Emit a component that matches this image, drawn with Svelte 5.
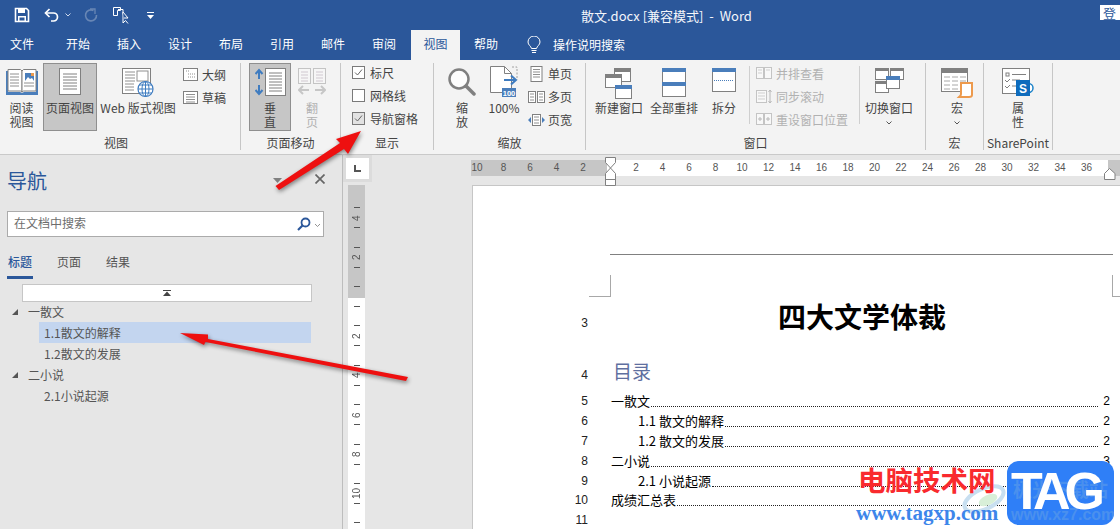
<script>
  const tabs = ['文件','开始','插入','设计','布局','引用','邮件','审阅'];
  const hnums = [10,8,6,4,2,0,2,4,6,8,10,12,14,16,18,20,22,24,26,28,30,32,34,36];
  const vnums = ['4','2','','2','4','6','8','10',''];
  const toc = [
    {n:5,t:'一散文',p:2,sub:false},
    {n:6,t:'1.1 散文的解释',p:2,sub:true},
    {n:7,t:'1.2 散文的发展',p:2,sub:true},
    {n:8,t:'二小说',p:3,sub:false},
    {n:9,t:'2.1 小说起源',p:3,sub:true},
    {n:10,t:'成绩汇总表',p:3,sub:false},
  ];
</script>

<div class="app">
  <header class="titlebar">
    <div class="qat">
      <svg class="q-save" width="16" height="16" viewBox="0 0 16 16"><path d="M1.5 1.5h11l2 2v11h-13z" fill="none" stroke="#fff" stroke-width="1.6"/><rect x="4" y="2" width="7" height="4" fill="#fff"/><rect x="4" y="9" width="8" height="5" fill="#fff"/><rect x="5.500" y="10.500" width="5" height="3" fill="#2b579a"/></svg>
      <svg class="q-undo" width="15" height="14" viewBox="0 0 15 14"><path d="M2 5h7.500a4 4 0 0 1 0 8H7" fill="none" stroke="#fff" stroke-width="1.700"/><path d="M5.500 1L1.500 5l4 4" fill="none" stroke="#fff" stroke-width="1.700"/></svg>
      <svg class="q-drop" width="6" height="4" viewBox="0 0 6 4"><path d="M.5.500L3 3 5.500.500" fill="none" stroke="#cdd8ea" stroke-width="1"/></svg>
      <svg class="q-redo" width="14" height="14" viewBox="0 0 14 14"><path d="M9.500 2.500a5.500 5.500 0 1 0 3 4.500" fill="none" stroke="#6f8cb8" stroke-width="1.600"/><path d="M6 1h5v5" fill="none" stroke="#6f8cb8" stroke-width="1.300"/></svg>
      <svg class="q-touch" width="16" height="18" viewBox="0 0 16 18"><path d="M.5 .5h7v3h-3v5h-4z" fill="none" stroke="#fff"/><path d="M5 2.500h5v5" fill="none" stroke="#fff"/><path d="M10 5v11l2.500-2.500 2.500 3" fill="#2b579a" stroke="#fff"/><path d="M10 5l5 6h-4" fill="#2b579a" stroke="#fff"/></svg>
      <svg class="q-more" width="7" height="7" viewBox="0 0 7 7"><rect x="0" y="0" width="7" height="1" fill="#fff"/><path d="M0 3h7L3.500 7z" fill="#fff"/></svg>
    </div>
    <div class="doc-title">散文.docx [兼容模式]&nbsp; -&nbsp; Word</div>
    <div class="login">登</div>
  </header>

  <nav class="tabs">
    {#each tabs as t}<span class="tab">{t}</span>{/each}
    <span class="tab active">视图</span>
    <span class="tab help">帮助</span>
    <svg class="bulb" width="14" height="18" viewBox="0 0 14 18"><path d="M4.500 12.500C4 10 1 9 1 6a6 6 0 0 1 12 0c0 3-3 4-3.500 6.500z" fill="none" stroke="#fff"/><path d="M4.500 14.500h5M5 16.500h4" stroke="#fff"/></svg>
    <span class="tell">操作说明搜索</span>
  </nav>

  <section class="ribbon">
    <!-- 视图 -->
    <div class="group g-view">
      <div class="items">
        <div class="big w39"><div class="ico">
          <svg width="32" height="27" viewBox="0 0 32 27"><path d="M0 3h2v21h12l2 1 2-1h12V3h2v24H0z" fill="#4a7ebb"/><path d="M2 1.500h12.500l1.500 1.500v21l-1.500-1H2z" fill="#fff" stroke="#808080"/><path d="M30 1.500H17.500L16 3v21l1.500-1H30z" fill="#fff" stroke="#808080"/><path d="M4 6h9M4 9h9M4 12h9M4 15h9M4 18h9M18 15h10M18 18h10" stroke="#909090"/><rect x="19" y="5" width="9" height="8" fill="#4a7ebb"/><path d="M19 13l3-4 2 2 2-1 2 3z" fill="#fff"/><rect x="25" y="5" width="3" height="3" fill="#ed9a4d"/></svg>
        </div><div class="txt">阅读<br>视图</div></div>
        <div class="big w54 on"><div class="ico">
          <svg width="22" height="27" viewBox="0 0 22 27"><rect x=".5" y=".5" width="21" height="26" fill="#fff" stroke="#808080"/><path d="M4 6h14M4 9h14M4 12h14M4 15h14M4 18h14M4 21h14" stroke="#808080"/></svg>
        </div><div class="txt">页面视图</div></div>
        <div class="big w78"><div class="ico">
          <svg width="32" height="30" viewBox="0 0 32 30"><rect x=".5" y=".5" width="28" height="25" fill="#fff" stroke="#808080"/><rect x="15" y="3" width="11" height="10" fill="#fff" stroke="#909090"/><path d="M3 4h10M3 7h10M3 10h10M3 13h10M3 16h9M3 19h9M3 22h9" stroke="#909090"/><circle cx="23.500" cy="21" r="7.500" fill="#fff" stroke="#3f7cc0" stroke-width="1.200"/><ellipse cx="23.500" cy="21" rx="3.500" ry="7.500" fill="none" stroke="#3f7cc0"/><path d="M16 21h15M17 17h13M17 25h13M23.500 13.500v15" stroke="#3f7cc0"/></svg>
        </div><div class="txt nw">Web 版式视图</div></div>
        <div class="col ml4">
          <div class="small"><svg width="16" height="14" viewBox="0 0 16 14"><rect x=".5" y=".5" width="14" height="12" fill="#fff" stroke="#808080"/><path d="M3 3h4M5 6h7M5 9h7" stroke="#909090" stroke-dasharray="1 1"/></svg><span>大纲</span></div>
          <div class="small"><svg width="16" height="14" viewBox="0 0 16 14"><rect x=".5" y=".5" width="14" height="12" fill="#fff" stroke="#808080"/><path d="M3 3.500h9M3 6h9M3 8.500h9M3 11h9" stroke="#909090"/></svg><span>草稿</span></div>
        </div>
      </div>
      <div class="label shift">视图</div>
    </div>

    <!-- 页面移动 -->
    <div class="group g-move">
      <div class="items">
        <div class="big w42 on"><div class="ico">
          <svg width="31" height="28" viewBox="0 0 31 28"><rect x="10.500" y=".5" width="20" height="27" fill="#fff" stroke="#808080"/><path d="M14 5h13M14 8h13M14 11h13M14 14h13M14 17h13M14 20h13M14 23h13" stroke="#808080"/><path d="M4 2v9M0.500 6L4 2l3.500 4M4 17v9M.5 22L4 26l3.500-4" fill="none" stroke="#3f7cc0" stroke-width="2"/></svg>
        </div><div class="txt">垂<br>直</div></div>
        <div class="big w36 off"><div class="ico">
          <svg width="28" height="27" viewBox="0 0 28 27"><rect x=".5" y=".5" width="12" height="15" fill="#f6f6f6" stroke="#c4c4c4"/><rect x="15.500" y=".5" width="12" height="15" fill="#f6f6f6" stroke="#c4c4c4"/><path d="M3 4h7M3 7h7M3 10h7M3 13h7M18 4h7M18 7h7M18 10h7M18 13h7" stroke="#d0c8d0"/><path d="M1 22h10M5 18l-4 4 4 4M17 22h10M23 18l4 4-4 4" fill="none" stroke="#c6c6c6" stroke-width="2"/></svg>
        </div><div class="txt">翻<br>页</div></div>
      </div>
      <div class="label">页面移动</div>
    </div>

    <!-- 显示 -->
    <div class="group g-show">
      <div class="items">
        <div class="col up2">
          <div class="check"><svg width="13" height="13" viewBox="0 0 13 13"><rect x=".5" y=".5" width="12" height="12" fill="#fff" stroke="#7a7a7a"/><path d="M3 6.500l2.500 2.500L10 3.500" fill="none" stroke="#666"/></svg><span>标尺</span></div>
          <div class="check"><svg width="13" height="13" viewBox="0 0 13 13"><rect x=".5" y=".5" width="12" height="12" fill="#fff" stroke="#7a7a7a"/></svg><span>网格线</span></div>
          <div class="check"><svg width="13" height="13" viewBox="0 0 13 13"><rect x=".5" y=".5" width="12" height="12" fill="#e2e2e2" stroke="#7a7a7a"/><path d="M3 6.500l2.500 2.500L10 3.500" fill="none" stroke="#666"/></svg><span>导航窗格</span></div>
        </div>
      </div>
      <div class="label">显示</div>
    </div>

    <!-- 缩放 -->
    <div class="group g-zoom">
      <div class="items">
        <div class="big w40"><div class="ico">
          <svg width="28" height="28" viewBox="0 0 28 28"><circle cx="11" cy="11" r="9.500" fill="#fdfdfd" stroke="#808080" stroke-width="2.500"/><path d="M18 18l8 8" stroke="#808080" stroke-width="3.500" stroke-linecap="round"/></svg>
        </div><div class="txt">缩<br>放</div></div>
        <div class="big w40"><div class="ico tall">
          <svg width="28" height="32" viewBox="0 0 28 32"><path d="M.5 .5h14l7 7v19H.5z" fill="#fff" stroke="#808080"/><path d="M14.500 .5v7h7" fill="none" stroke="#808080"/><path d="M22 1h5v13" fill="none" stroke="#a0a0a0" stroke-dasharray="2 1.500"/><path d="M14 14h12M21 9.500l5 4.500-5 4.500" fill="none" stroke="#3f7cc0" stroke-width="2"/><rect x="12" y="22" width="14" height="9" fill="#4a7ebb"/><text x="19" y="29.500" font-size="7.500" fill="#fff" text-anchor="middle" font-family="Liberation Sans" font-weight="700">100</text></svg>
        </div><div class="txt">100%</div></div>
        <div class="col ml2 up1">
          <div class="small s18"><svg width="12" height="16" viewBox="0 0 12 16"><rect x=".5" y=".5" width="11" height="15" fill="#fff" stroke="#808080"/><path d="M2.500 3.500h7M2.500 6h7M2.500 8.500h7M2.500 11h7" stroke="#909090"/></svg><span>单页</span></div>
          <div class="small s18"><svg width="17" height="12" viewBox="0 0 17 12"><rect x=".5" y=".5" width="7" height="11" fill="#fff" stroke="#808080"/><rect x="9.500" y=".5" width="7" height="11" fill="#fff" stroke="#808080"/><path d="M2 3h4M2 6h4M2 9h4M11 3h4M11 6h4M11 9h4" stroke="#909090"/></svg><span>多页</span></div>
          <div class="small s18"><svg width="17" height="12" viewBox="0 0 17 12"><rect x="4.500" y=".5" width="8" height="11" fill="#fff" stroke="#808080"/><path d="M6 3h5M6 6h5M6 9h5" stroke="#909090"/><path d="M3 3L0 6l3 3zM14 3l3 3-3 3z" fill="#4a7ebb"/></svg><span>页宽</span></div>
        </div>
      </div>
      <div class="label">缩放</div>
    </div>

    <!-- 窗口 -->
    <div class="group g-win">
      <div class="items">
        <div class="big w48"><div class="ico">
          <svg width="29" height="31" viewBox="0 0 29 31"><rect x="9.500" y=".5" width="16" height="13" fill="#fff" stroke="#808080"/><rect x="9" y="0" width="17" height="4" fill="#808080"/><rect x=".5" y="6.500" width="16" height="13" fill="#fff" stroke="#808080"/><rect x="0" y="6" width="17" height="4" fill="#808080"/><rect x="10.500" y="17.500" width="16" height="13" fill="#fff" stroke="#808080"/><rect x="10" y="17" width="17" height="4" fill="#4a7ebb"/></svg>
        </div><div class="txt nw">新建窗口</div></div>
        <div class="big w48 ml7"><div class="ico">
          <svg width="24" height="29" viewBox="0 0 24 29"><rect x=".5" y=".5" width="23" height="28" fill="#fff" stroke="#808080"/><rect x="0" y="0" width="24" height="4" fill="#4a7ebb"/><rect x="0" y="14" width="24" height="4" fill="#4a7ebb"/></svg>
        </div><div class="txt nw">全部重排</div></div>
        <div class="big w40 ml6"><div class="ico">
          <svg width="24" height="24" viewBox="0 0 24 24"><rect x=".5" y=".5" width="23" height="23" fill="#fff" stroke="#808080"/><rect x="0" y="0" width="24" height="4" fill="#4a7ebb"/><path d="M2 12.500h20" stroke="#4a7ebb" stroke-dasharray="1 1"/></svg>
        </div><div class="txt nw">拆分</div></div>
        <div class="vsep sep-a"></div>
        <div class="col off-col up1">
          <div class="small"><svg width="16" height="13" viewBox="0 0 16 13"><rect x=".5" y=".5" width="7" height="11" fill="#f8f8f8" stroke="#c4c4c4"/><rect x="8.500" y=".5" width="7" height="11" fill="#f8f8f8" stroke="#c4c4c4"/><path d="M2 3h4M2 6h4M10 3h4" stroke="#cfcfcf"/></svg><span>并排查看</span></div>
          <div class="small"><svg width="16" height="15" viewBox="0 0 16 15"><rect x=".5" y="1.500" width="10" height="12" fill="#f8f8f8" stroke="#c4c4c4"/><path d="M2 4h7M2 7h7M2 10h7" stroke="#cfcfcf"/><path d="M14 1v13M12.500 3L14 1l1.500 2M12.500 12l1.500 2 1.500-2" fill="none" stroke="#b8b8b8"/></svg><span>同步滚动</span></div>
          <div class="small"><svg width="16" height="13" viewBox="0 0 16 13"><rect x=".5" y=".5" width="7" height="11" fill="#f8f8f8" stroke="#c4c4c4"/><rect x="8.500" y=".5" width="7" height="11" fill="#f8f8f8" stroke="#c4c4c4"/><path d="M2 6h4M4 4v4M10 6h4M12 4v4" stroke="#b8b8b8"/></svg><span>重设窗口位置</span></div>
        </div>
        <div class="vsep sep-b"></div>
        <div class="big w50"><div class="ico">
          <svg width="29" height="25" viewBox="0 0 29 25"><rect x=".5" y=".5" width="13" height="11" fill="#fff" stroke="#808080"/><rect x="0" y="0" width="14" height="3" fill="#808080"/><rect x="15.500" y=".5" width="13" height="11" fill="#fff" stroke="#808080"/><rect x="15" y="0" width="14" height="3" fill="#808080"/><rect x=".5" y="13.500" width="13" height="11" fill="#fff" stroke="#808080"/><rect x="0" y="13" width="14" height="3" fill="#808080"/><rect x="11.500" y="8.500" width="13" height="12" fill="#fff" stroke="#808080"/><rect x="11" y="8" width="14" height="4" fill="#4a7ebb"/></svg>
        </div><div class="txt nw">切换窗口</div><svg class="chev" width="6" height="4" viewBox="0 0 6 4"><path d="M.5.500L3 3 5.500.500" fill="none" stroke="#555"/></svg></div>
      </div>
      <div class="label">窗口</div>
    </div>

    <!-- 宏 -->
    <div class="group g-macro">
      <div class="items">
        <div class="big w56"><div class="ico">
          <svg width="32" height="30" viewBox="0 0 32 30"><rect x=".5" y=".5" width="26" height="23" fill="#fff" stroke="#808080"/><rect x="0" y="0" width="27" height="5" fill="#808080"/><path d="M3 9h6M11 9h6M19 9h6M3 13h6M11 13h6M19 13h6M3 17h6M11 17h6M3 21h6M11 21h6" stroke="#a8a8a8"/><path d="M20 15h11v12c0 2-2 2-3 2h-10c1-1 2-1 2-3z" fill="#fff" stroke="#ed9a4d" stroke-width="2"/></svg>
        </div><div class="txt">宏</div><svg class="chev" width="6" height="4" viewBox="0 0 6 4"><path d="M.5.500L3 3 5.500.500" fill="none" stroke="#555"/></svg></div>
      </div>
      <div class="label">宏</div>
    </div>

    <!-- SharePoint -->
    <div class="group g-sp">
      <div class="items">
        <div class="big w68"><div class="ico">
          <svg width="32" height="28" viewBox="0 0 32 28"><rect x=".5" y=".5" width="27" height="25" fill="#fff" stroke="#808080"/><rect x="4" y="5" width="3" height="3" fill="none" stroke="#808080"/><path d="M10 6.500h14M10 12h8M10 18h8" stroke="#808080"/><path d="M3 12l2 2 3-3M3 18l2 2 3-3" fill="none" stroke="#808080"/><circle cx="26.500" cy="20" r="4.500" fill="#fff" stroke="#1c82c8" stroke-width="1.500"/><rect x="14" y="12" width="14" height="16" fill="#0f6cbd"/><text x="21" y="24.500" font-size="12" font-weight="700" fill="#fff" text-anchor="middle" font-family="Liberation Sans">S</text></svg>
        </div><div class="txt">属<br>性</div></div>
      </div>
      <div class="label">SharePoint</div>
    </div>
  </section>

  <main class="main">
    <aside class="nav">
      <div class="nav-head">
        <span class="nav-title">导航</span>
        <svg class="nav-drop" width="9" height="5" viewBox="0 0 9 5"><path d="M0 0h9L4.500 5z" fill="#808080"/></svg>
        <svg class="nav-close" width="10" height="10" viewBox="0 0 10 10"><path d="M.5.500l9 9M9.500.500l-9 9" stroke="#666" stroke-width="1.700"/></svg>
      </div>
      <div class="search">
        <span>在文档中搜索</span>
        <svg class="mag" width="14" height="14" viewBox="0 0 14 14"><circle cx="8.500" cy="5.500" r="4" fill="none" stroke="#2b579a" stroke-width="1.800"/><path d="M5.500 8.500L1 13" stroke="#2b579a" stroke-width="2.200"/></svg>
        <svg class="sdrop" width="5" height="3" viewBox="0 0 5 3"><path d="M0 0l2.500 2.500L5 0" fill="none" stroke="#777" stroke-width=".8"/></svg>
      </div>
      <div class="nav-tabs">
        <span class="nt sel">标题</span><span class="nt">页面</span><span class="nt">结果</span>
      </div>
      <div class="collapse"><svg width="8" height="6" viewBox="0 0 8 6"><path d="M0 0h8v1H0zM4 1.500L8 6H0z" fill="#444"/></svg></div>
      <div class="tree">
        <div class="row top"><svg width="6" height="6" viewBox="0 0 6 6"><path d="M6 0v6H0z" fill="#555"/></svg><span>一散文</span></div>
        <div class="row child hl"><span>1.1散文的解释</span></div>
        <div class="row child"><span>1.2散文的发展</span></div>
        <div class="row top"><svg width="6" height="6" viewBox="0 0 6 6"><path d="M6 0v6H0z" fill="#555"/></svg><span>二小说</span></div>
        <div class="row child"><span>2.1小说起源</span></div>
      </div>
    </aside>

    <div class="vcol">
      <div class="corner"><svg width="7" height="7" viewBox="0 0 7 7"><path d="M1 0v6h6" fill="none" stroke="#555" stroke-width="2"/></svg></div>
      <div class="vruler">
        {#each vnums as n}
          <div class="vcell"><i></i><span>{n}</span><i></i></div>
        {/each}
      </div>
    </div>

    <div class="docarea">
      <div class="hband">
        <div class="hruler">
          {#each hnums as n}<span class="hn">{n === 0 ? '' : n}</span>{/each}
        </div>
      </div>
      <div class="page">
        <div class="hdr-line"></div>
        <div class="crops"><i class="crop-l"></i><i class="crop-r"></i></div>
        <div class="line title-line"><b class="no">3</b><h1>四大文学体裁</h1></div>
        <div class="line toc-head"><b class="no">4</b><h2>目录</h2></div>
        {#each toc as r}
          <div class="line toc"><b class="no">{r.n}</b>
            <div class="toc-row" class:sub={r.sub}><span>{r.t}</span><em></em><span class="pn">{r.p}</span></div>
          </div>
        {/each}
        <div class="line toc"><b class="no">11</b><div></div></div>
      </div>
    </div>
  </main>

  <!-- ruler markers overlay -->
  <svg class="markers" width="14" height="30" viewBox="0 0 14 30"><path d="M1.500 1.500h10v5L6.500 12l5 5.500v12h-10v-12l5-5.500-5-5.500z" fill="#fff" stroke="#808080"/><path d="M1.500 23.500h10" stroke="#808080"/></svg>
  <svg class="marker-r" width="12" height="12" viewBox="0 0 12 12"><path d="M.5 11.500v-6l5-5 5.500 5v6z" fill="#fff" stroke="#808080"/></svg>

  <!-- annotation arrows overlay -->
  <svg class="arrows" width="1120" height="529" viewBox="0 0 1120 529">
    <path d="M275.500 186L340 143l-4-4 25-8-13 23-4-5-65 41z" fill="#ee1010"/>
    <path d="M408 377L208 339v-4.500L180 333l24 12 1.500-3L406 381z" fill="#ee1010"/>
  </svg>

  <!-- watermark overlay -->
  <div class="wm">
    <svg class="swirl" width="44" height="38" viewBox="0 0 44 38"><ellipse cx="22" cy="19" rx="21" ry="10" fill="none" stroke="#c8dff0" stroke-width="4" transform="rotate(-25 22 19)"/><ellipse cx="26" cy="20" rx="10" ry="5" fill="#d8efd8" transform="rotate(-25 26 20)"/></svg>
    <div class="wm-cn">电脑技术网</div>
    <div class="wm-url">www.tagxp.com</div>
    <div class="wm-logo">
      <span class="faint f1">极光下载站</span>
      <span class="faint f2">www.xz7.com</span>
      <span class="tag">TAG</span>
    </div>
  </div>
</div>

<style>
  :global(body){margin:0;background:#e6e6e6;}
  .app{position:relative;width:1120px;height:529px;overflow:hidden;display:flex;flex-direction:column;font-family:"Noto Sans CJK SC","Noto Sans",sans-serif;font-size:12px;color:#444;}
  svg{display:block;flex:none;}

  .titlebar{height:30px;background:#2b579a;color:#fff;display:flex;align-items:center;flex:none;}
  .qat{width:581px;display:flex;align-items:center;flex:none;}
  .q-save{margin-left:14px;}
  .q-undo{margin-left:14px;}
  .q-drop{margin-left:6px;}
  .q-redo{margin-left:13px;opacity:.9;}
  .q-touch{margin-left:15px;margin-top:2px;}
  .q-more{margin-left:18px;}
  .doc-title{font-size:13px;color:#f4f6fa;white-space:nowrap;}
  .login{margin-left:auto;width:20px;height:15px;margin-top:-6px;background:#fff;color:#2b579a;font-size:13px;line-height:15px;padding-left:3px;box-sizing:border-box;overflow:hidden;}

  .tabs{height:30px;background:#2b579a;display:flex;align-items:center;flex:none;padding-left:10px;color:#fff;font-size:12px;}
  .tab{width:24px;margin-right:27px;text-align:center;line-height:28px;height:30px;white-space:nowrap;}
  .tab:first-child{margin-right:32px;}
  .tab.active{background:#f3f3f3;color:#2b579a;width:49px;margin-left:-12px;margin-right:14px;}
  .tab.help{margin-right:0;}
  .bulb{margin-left:29px;margin-right:12px;}
  .tell{white-space:nowrap;margin-top:-2px;}

  .ribbon{height:95px;flex:none;background:#f3f3f3;border-bottom:1px solid #c9c9c9;box-sizing:border-box;display:flex;padding-top:3px;}
  .group{height:87px;box-sizing:border-box;border-right:1px solid #c6c6c6;display:flex;flex-direction:column;flex:none;}
  .g-view{width:241px;}.g-move{width:100px;}.g-show{width:93px;}.g-zoom{width:152px;}.g-win{width:340px;}.g-macro{width:58px;}.g-sp{width:69px;}
  .items{display:flex;height:72px;box-sizing:border-box;flex:none;}
  .g-view .items{padding-left:2px;gap:2px;}
  .g-move .items{padding-left:8px;gap:3px;}
  .g-show .items{padding-left:11px;}
  .g-zoom .items{padding-left:8px;gap:2px;}
  .g-win .items{padding-left:9px;}
  .g-macro .items{padding-left:3px;}
  .label{height:15px;line-height:15px;text-align:center;color:#444;white-space:nowrap;}
  .label.shift{padding-right:8px;}

  .big{display:flex;flex-direction:column;align-items:center;box-sizing:border-box;height:68px;flex:none;}
  .big.on{background:#c6c6c6;border:1px solid #8f8f8f;}
  .big.off{color:#b1b1b1;}
  .ico{height:38px;display:flex;align-items:flex-start;justify-content:center;padding-top:5px;box-sizing:border-box;flex:none;}
  .on .ico{height:37px;padding-top:4px;}
  .ico.tall{padding-top:3px;}
  .txt{text-align:center;line-height:14px;}
  .nw{white-space:nowrap;}
  .chev{margin-top:6px;}
  .w36{width:36px;}.w39{width:39px;}.w40{width:40px;}.w42{width:42px;}.w48{width:48px;}.w50{width:50px;}.w54{width:54px;}.w56{width:56px;}.w68{width:68px;}.w78{width:78px;}
  .ml2{margin-left:2px;}.ml4{margin-left:4px;}.ml6{margin-left:6px;}.ml7{margin-left:7px;}

  .col{display:flex;flex-direction:column;}
  .up1{margin-top:-1px;}
  .up2{margin-top:-2px;}
  .small{height:23px;display:flex;align-items:center;gap:3px;white-space:nowrap;}
  .s18 svg{width:17px;}
  .vsep{width:1px;height:58px;background:#cfcfcf;margin-top:3px;flex:none;}
  .sep-a{margin-left:5px;}
  .off-col{margin-left:6px;width:96px;color:#b1b1b1;}
  .off-col .small{gap:4px;}
  .sep-b{margin-left:7px;margin-right:4px;}

  .check{height:23px;display:flex;align-items:center;gap:5px;white-space:nowrap;}

  .main{flex:1;display:flex;min-height:0;background:#e6e6e6;}
  .nav{width:342px;flex:none;border-right:1px solid #bdbdbd;box-sizing:content-box;}
  .nav-head{display:flex;align-items:center;height:52px;padding-left:7px;box-sizing:border-box;}
  .nav-title{font-size:20px;color:#2b579a;line-height:52px;}
  .nav-drop{margin-left:226px;margin-top:-2px;}
  .nav-close{margin-left:33px;margin-top:-4px;}
  .search{margin:4px 0 0 7px;width:317px;height:26px;box-sizing:border-box;background:#fff;border:1px solid #ababab;display:flex;align-items:center;padding-left:6px;color:#6d6d6d;}
  .search span{margin-top:-3px;}
  .mag{margin-left:auto;}
  .sdrop{margin:2px 3px 0 4px;}
  .nav-tabs{display:flex;margin:14px 0 0 7px;gap:23px;height:30px;}
  .nt{height:28px;line-height:22px;width:26px;text-align:center;white-space:nowrap;color:#555;}
  .nt.sel{color:#2b579a;border-bottom:3px solid #2b579a;box-sizing:border-box;font-weight:500;}
  .collapse{margin:3px 0 0 22px;width:290px;height:18px;box-sizing:border-box;background:#fff;border:1px solid #c6c6c6;display:flex;align-items:center;justify-content:center;}
  .tree{margin-top:-1px;}
  .row{height:21px;display:flex;align-items:center;color:#555;}
  .top{padding-left:12px;gap:10px;}
  .child{margin-left:39px;width:272px;padding-left:5px;box-sizing:border-box;}
  .hl{background:#c3d5ef;}

  .vcol{width:29px;flex:none;display:flex;flex-direction:column;}
  .corner{width:29px;height:27px;background:#fff;border:3px solid #dcdcdc;box-sizing:border-box;display:flex;align-items:center;justify-content:center;flex:none;}
  .vruler{margin:3px 0 0 5px;width:17px;flex:1;padding-top:13px;overflow:hidden;background:linear-gradient(#c6c6c6 113px,#fff 113px);}
  .vcell{height:39.4px;display:flex;flex-direction:column;align-items:center;justify-content:center;gap:3.500px;}
  .vcell i{display:block;width:6px;height:1px;background:#555;flex:none;}
  .vcell span{height:12px;writing-mode:vertical-rl;transform:rotate(180deg);font-size:10px;line-height:12px;font-family:"Liberation Sans",sans-serif;color:#555;text-align:center;}

  .docarea{flex:1;display:flex;flex-direction:column;min-width:0;padding-left:100px;}
  .hband{height:30px;flex:none;}
  .hruler{margin:5px 0 0 -1px;height:16px;background:linear-gradient(90deg,#c6c6c6 136px,#fff 136px,#fff 637px,#c6c6c6 637px);display:flex;overflow:hidden;}
  .hn{flex:none;width:26.5px;text-align:center;font-size:10px;line-height:16px;font-family:"Liberation Sans",sans-serif;color:#555;}
  .hn:first-child{margin-left:-7.25px;}

  .page{flex:1;background:#fff;border:1px solid #c6c6c6;border-width:1px 0 0 1px;box-sizing:border-box;color:#000;font-size:13px;}
  .hdr-line{height:1px;background:#808080;margin:68px 7px 0 137px;}
  .crops{display:flex;justify-content:space-between;height:22px;margin-top:20px;padding-left:116px;}
  .crops i{display:block;height:21px;border-bottom:1px solid #a8a8a8;}
  .crop-l{width:21px;border-right:1px solid #a8a8a8;}
  .crop-r{width:7px;border-left:1px solid #a8a8a8;}
  .line{display:grid;grid-template-columns:115px 502px;column-gap:23px;align-items:end;}
  .no{font-weight:400;text-align:right;font-size:12px;line-height:20px;color:#222;font-family:"Liberation Sans",sans-serif;}
  .title-line{height:41px;}
  .title-line .no{padding-bottom:5px;}
  h1{margin:0 0 2px;font-size:28px;line-height:39px;text-align:center;font-weight:700;color:#000;}
  .toc-head{height:41px;margin-top:12px;}
  .toc-head .no{padding-bottom:6px;}
  h2{margin:0 0 5px 2px;font-size:19px;line-height:30px;font-weight:400;color:#5f6f9f;}
  .toc{height:19.900px;}
  .toc-row{display:flex;align-items:flex-end;line-height:20px;white-space:nowrap;}
  .toc-row.sub{padding-left:27px;}
  .toc-row em{flex:1;border-bottom:1px dotted #222;margin:0 1px 4px 1px;}
  .pn{padding:0 3px 0 4px;font-size:12px;font-family:"Liberation Sans",sans-serif;}

  .markers{position:absolute;left:604px;top:156px;}
  .marker-r{position:absolute;left:1104px;top:168px;}
  .arrows{position:absolute;left:0;top:0;pointer-events:none;filter:drop-shadow(1px 2px 2px rgba(0,0,0,.45));}

  .wm{position:absolute;left:800px;top:400px;width:320px;height:129px;}
  .swirl{position:absolute;left:162px;top:80px;}
  .wm-cn{position:absolute;left:58px;top:61px;font-size:27.5px;font-weight:700;line-height:36px;color:#f92a2e;white-space:nowrap;}
  .wm-url{position:absolute;left:56px;top:101px;font-family:"Liberation Serif",serif;font-size:21px;font-weight:700;line-height:24px;color:#3d86ea;white-space:nowrap;}
  .wm-logo{position:absolute;left:207px;top:61px;width:107px;height:64px;border-radius:12px;background:#2f7ff7;overflow:hidden;}
  .tag{position:absolute;left:4px;top:0;font-family:"Liberation Sans",sans-serif;font-weight:700;font-size:52px;line-height:60px;color:#fff;letter-spacing:-6px;white-space:nowrap;}
  .faint{position:absolute;white-space:nowrap;font-weight:700;color:#4a90ee;}
  .f1{left:6px;top:16px;font-size:19px;line-height:24px;}
  .f2{left:4px;top:44px;font-size:16px;line-height:20px;font-family:"Liberation Sans",sans-serif;}
</style>
